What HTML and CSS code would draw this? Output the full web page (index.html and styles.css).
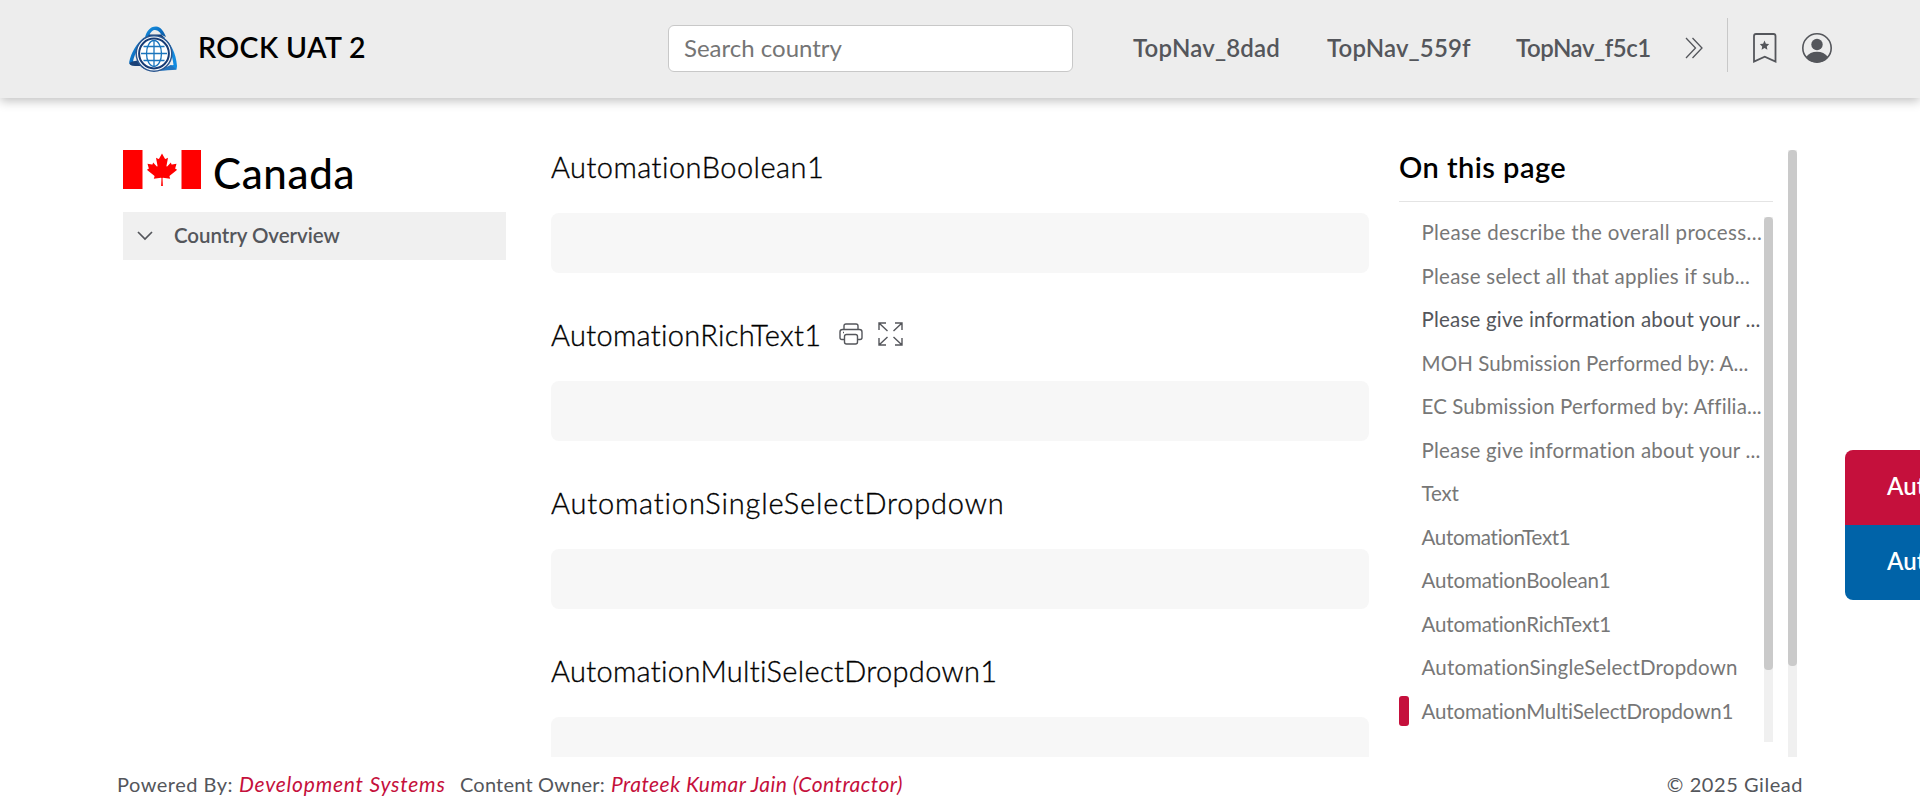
FILE: index.html
```
<!DOCTYPE html>
<html lang="en">
<head>
<meta charset="utf-8">
<title>ROCK UAT 2</title>
<link rel="stylesheet" href="styles.css">
</head>
<body>
<header class="header">
  <div class="brand">
    <svg class="logo" viewBox="0 0 48 47" fill="none">
      <defs>
        <linearGradient id="band" x1="0" y1="0" x2="1" y2="1">
          <stop offset="0" stop-color="#1b9be8"/><stop offset=".55" stop-color="#0a6cc0"/><stop offset="1" stop-color="#12508f"/>
        </linearGradient>
      </defs>
      <path d="M15.500 14C17 5 21 .5 27 .5C32 .5 35 6 37 11L32.500 9C30.500 5 28 4 25 4C22 5 20 9 19 12Z" fill="url(#band)"/>
      <path d="M20 8.500H32L36 12H18.500Z" fill="#14396e"/>
      <path d="M34 11C42 17 47 27 48 40L47.500 43.500H37L41 39.500L44.500 39C43.500 29 40 20 33 13Z" fill="#128be0"/>
      <path d="M15.500 11C7 18 2 27 .2 36Q0 39 3 39.300L9.500 39L7 35.500H4C5.500 28 9.500 21 16 16Z" fill="url(#band)"/>
      <path d="M3.500 35.500L8.500 34.500L12 40L6 40Q1 40 .4 37Z" fill="#1c4277"/>
      <path d="M11 40C20 44 32 44 42 39L47.500 43.500C36 44.500 18 47 11 40Z" fill="#2374be"/>
      <circle cx="25" cy="27.500" r="17.800" fill="#fff" stroke="#2b568f" stroke-width="1.500"/>
      <circle cx="25" cy="27.500" r="14.900" stroke="#173b74" stroke-width="2"/>
      <g stroke="#1b75bd" stroke-width="1.300"><path d="M25 14.500V40.500M12 27.500H38M14.500 20.500H35.500M14.500 34.500H35.500"/><ellipse cx="25" cy="27.500" rx="7.500" ry="13"/></g>
    </svg>
    <span class="brand-name">ROCK UAT 2</span>
  </div>
  <div class="search">Search country</div>
  <nav class="topnav">
    <a class="nav-a">TopNav_8dad</a>
    <a class="nav-b">TopNav_559f</a>
    <a class="nav-c">TopNav_f5c1</a>
  </nav>
  <svg class="more" viewBox="0 0 18 22"><path d="M1 1L10.5 11L1 21M7.5 1L17 11L7.5 21"/></svg>
  <span class="divider"></span>
  <svg class="bookmark" viewBox="0 0 24 30"><path d="M1 28.6V3Q1 1 3 1H20.500Q22.500 1 22.500 3V28.600L11.750 23.800Z" fill="none" stroke="#54565b" stroke-width="1.8"/><path d="M11.500 7.600L12.900 10.700L16.200 11.100L13.800 13.400L14.400 16.700L11.500 15.100L8.600 16.700L9.200 13.400L6.800 11.100L10.100 10.700Z" fill="#54565b"/></svg>
  <svg class="user" viewBox="0 0 30 30"><circle cx="15" cy="15" r="14.200" fill="none" stroke="#54565b" stroke-width="1.600"/><circle cx="15" cy="11.500" r="5.700" fill="#54565b"/><path d="M4 24Q8 18.700 15 18.700T26 24Q21.500 29.500 15 29.500T4 24Z" fill="#54565b"/></svg>
</header>

<main class="main">
  <aside class="sidebar">
    <div class="country">
      <svg class="flag" viewBox="0 0 78 39"><path d="M0 0H78V39H0Z" fill="#fff"/><path d="M0 0H19.500V39H0ZM58.500 0H78V39H58.500Z" fill="#f00"/><path d="M39 3.600L36.200 8.600Q35.800 9.200 35 8.800L33 7.800L34.500 15.700Q34.700 17 33.600 16.200L30.100 12.400L29.600 14.200Q29.400 14.600 28.900 14.600L24.500 13.700L25.700 17.900Q25.900 18.700 25.400 18.900L23.800 19.700L31.300 25.700Q31.700 26 31.500 26.600L30.800 28.700L38 27.700Q38.500 27.700 38.500 28.200L38.100 36H39.900L39.500 28.200Q39.500 27.700 40 27.700L47.200 28.700L46.500 26.600Q46.300 26 46.700 25.700L54.200 19.700L52.600 18.900Q52.100 18.700 52.300 17.900L53.500 13.700L49.100 14.600Q48.600 14.600 48.400 14.200L47.900 12.400L44.400 16.200Q43.300 17 43.500 15.700L45 7.800L43 8.800Q42.200 9.200 41.800 8.600Z" fill="#f00"/></svg>
      <h1 class="country-name">Canada</h1>
    </div>
    <div class="section-link">
      <svg class="caret" viewBox="0 0 16 9"><path d="M1 1L8 8L15 1"/></svg>
      <span>Country Overview</span>
    </div>
  </aside>

  <section class="content">
    <article class="field"><h2 class="h-bool">AutomationBoolean1</h2><div class="value"></div></article>
    <article class="field">
      <h2 class="h-rich"><span class="rich-label">AutomationRichText1</span>
        <svg class="print" viewBox="0 0 24 22"><path d="M5 6.500V3Q5 1 7 1H17Q19 1 19 3V6.500M5.500 16.500H3Q1 16.500 1 14.500V9Q1 6.500 3.500 6.500H20.500Q23 6.500 23 9V14.500Q23 16.500 21 16.500H18.500M7.500 11.500H16.500Q18.500 11.500 18.500 13.500V19Q18.500 21 16.500 21H7.500Q5.500 21 5.500 19V13.500Q5.500 11.500 7.500 11.500ZM4 9.500H5"/></svg>
        <svg class="expand" viewBox="0 0 25 24"><path d="M9.500 9L1 1M1 8V1H8M15.500 9L24 1M17 1H24V8M9.500 15L1 23M1 16V23H8M15.500 15L24 23M24 16V23H17"/></svg>
      </h2>
      <div class="value"></div>
    </article>
    <article class="field"><h2 class="h-single">AutomationSingleSelectDropdown</h2><div class="value"></div></article>
    <article class="field"><h2 class="h-multi">AutomationMultiSelectDropdown1</h2><div class="value"></div></article>
  </section>

  <aside class="toc">
    <h2 class="toc-title">On this page</h2>
    <div class="toc-body">
      <ul class="toc-list">
        <li class="ls-6">Please describe the overall process...</li>
        <li class="ls-5">Please select all that applies if sub...</li>
        <li class="ls-4 hovered">Please give information about your ...</li>
        <li class="ls-3">MOH Submission Performed by: A...</li>
        <li class="ls-3">EC Submission Performed by: Affilia...</li>
        <li class="ls-4">Please give information about your ...</li>
        <li class="ls-1">Text</li>
        <li class="ls-0">AutomationText1</li>
        <li class="ls-1">AutomationBoolean1</li>
        <li class="ls-1">AutomationRichText1</li>
        <li class="ls-4">AutomationSingleSelectDropdown</li>
        <li class="ls-1 active">AutomationMultiSelectDropdown1</li>
      </ul>
      <div class="track"><div class="thumb"></div></div>
    </div>
  </aside>
  <div class="track page-track"><div class="thumb page-thumb"></div></div>
</main>

<footer class="footer">
  <span class="f-powered">Powered By:</span>
  <a class="f-dev">Development Systems</a>
  <span class="f-owner">Content Owner:</span>
  <a class="f-name">Prateek Kumar Jain (Contractor)</a>
  <span class="copyright">© 2025 Gilead</span>
</footer>

<div class="side-tabs">
  <div class="side-tab">Automation</div>
  <div class="side-tab blue">Automation</div>
</div>
</body>
</html>
```
FILE: styles.css
```
* { box-sizing: border-box; margin: 0; padding: 0; }
body {
  width: 1920px; height: 812px; overflow: hidden; position: relative;
  background: #fff; color: #54565b;
  font: 400 20px/24px Lato, sans-serif; font-variant-ligatures: none; white-space: nowrap;
}
svg { display: block; flex: none; overflow: visible; }

.header {
  display: flex; align-items: center; height: 98px; padding: 0 87px 3px 129px;
  background: #ededed; box-shadow: 0 3px 10px rgba(0, 0, 0, .25);
}
.brand { display: flex; align-items: center; gap: 21px; width: 539px; }
.logo { width: 48px; height: 47px; margin-top: 3px; }
.brand-name { font-size: 28.5px; line-height: 32px; font-weight: 600; color: #000; letter-spacing: .4px; margin-top: -2px; }
.search {
  width: 405px; height: 47px; margin-top: 2px; padding-left: 15px;
  border: 1px solid #c8c8c8; border-radius: 6px; background: #fff;
  color: #757575; font-size: 24px; line-height: 43px;
}
.topnav { display: flex; width: 552px; margin-left: 60px; font-size: 24px; line-height: 30px; font-weight: 600; }
.nav-a { width: 194px; letter-spacing: .2px; }
.nav-b { width: 189px; letter-spacing: .15px; }
.nav-c { letter-spacing: -.45px; }
.more { width: 18px; height: 22px; fill: none; stroke: #54565b; stroke-width: 1.3; margin-top: 1px; }
.divider { width: 1px; height: 54px; background: #c8c8c8; margin: -5px 25px 0 24px; }
.bookmark { width: 24px; height: 30px; }
.user { width: 30px; height: 30px; margin-left: 25px; }

.main { display: flex; height: 659px; padding: 52px 0 0 123px; }
.sidebar { width: 383px; }
.country { display: flex; gap: 12px; height: 62px; }
.flag { width: 78px; height: 39px; }
.country-name { font-size: 42px; line-height: 46px; font-weight: 500; color: #000; letter-spacing: .7px; }
.section-link {
  display: flex; align-items: center; gap: 21px; height: 48px; padding: 0 0 2px 14px;
  background: #f0f0f0; font-size: 20.5px; font-weight: 600; letter-spacing: -.05px;
}
.caret { width: 16px; height: 9px; fill: none; stroke: #54565b; stroke-width: 1.7; }

.content { width: 818px; margin-left: 45px; overflow: hidden; }
.field { height: 168px; }
.field h2 {
  display: flex; height: 63px; font-size: 29px; line-height: 34px; font-weight: 300; color: #000;
  -webkit-text-stroke: .35px #000;
}
.h-bool { letter-spacing: .46px; }
.h-rich { letter-spacing: .32px; }
.rich-label { width: 268px; }
.h-single { letter-spacing: .83px; }
.h-multi { letter-spacing: .33px; }
.print, .expand { fill: none; stroke: #54565b; stroke-width: 1.4; }
.print { width: 24px; height: 22px; margin: 5px 0 0 20px; }
.expand { width: 25px; height: 24px; margin: 4px 0 0 15px; }
.value { height: 60px; border-radius: 8px; background: #f7f7f7; }

.toc { width: 374px; margin-left: 30px; }
.toc-title {
  height: 52px; border-bottom: 1px solid #e4e4e4;
  font-size: 29px; line-height: 33px; font-weight: 600; color: #000; letter-spacing: .45px;
}
.toc-body { display: flex; height: 525px; margin-top: 15px; }
.toc-list { width: 365px; list-style: none; padding-top: 3px; font-size: 20.5px; }
.toc-list li { height: 43.5px; padding-left: 22.5px; line-height: 25px; color: #777; }
.toc-list .hovered { color: #54565b; }
.toc-list .active { position: relative; }
.active::before {
  content: ""; position: absolute; left: 0; top: -3px; width: 10px; height: 30px;
  border-radius: 3px; background: #c5103c;
}
.ls-0 { letter-spacing: -.3px; }
.ls-1 { letter-spacing: -.14px; }
.ls-3 { letter-spacing: .11px; }
.ls-4 { letter-spacing: .2px; }
.ls-5 { letter-spacing: .25px; }
.ls-6 { letter-spacing: .37px; }
.track { width: 9px; flex: none; background: #f0f0f0; }
.thumb { height: 453px; border-radius: 4px; background: #cacaca; }
.page-track { margin-left: 15px; }
.page-thumb { height: 516px; }

.footer { display: flex; padding: 15px 117px 0 117px; }
.footer a { color: #c5103c; font-style: italic; font-size: 21px; }
.f-powered { width: 122px; letter-spacing: .5px; }
.f-dev { width: 221px; letter-spacing: .78px; }
.f-owner { width: 151px; letter-spacing: .2px; }
.f-name { letter-spacing: .48px; }
.copyright { margin-left: auto; letter-spacing: .55px; }

.side-tabs {
  position: absolute; left: 1845px; top: 450px; width: 75px; overflow: hidden;
  border-radius: 8px 0 0 8px; color: #fff; font-size: 24px; font-weight: 600; line-height: 72px;
}
.side-tab { height: 75px; padding-left: 42px; background: #c5103c; }
.blue { background: #0063a8; }
```
